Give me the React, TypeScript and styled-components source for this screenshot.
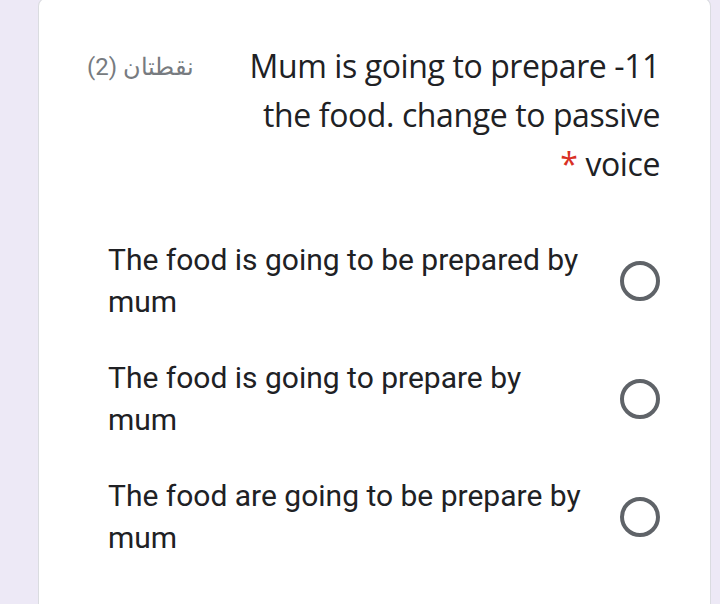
import React from "react";
import styled, { createGlobalStyle } from "styled-components";

const Global = createGlobalStyle`
  html, body { margin: 0; padding: 0; background: #ede9f6; }
  body { width: 720px; height: 604px; overflow: hidden; font-family: Roboto, "Noto Sans", sans-serif; }
`;

const Page = styled.div`
  width: 720px;
  height: 604px;
  display: flex;
  padding-left: 38px;
  padding-right: 9px;
  box-sizing: border-box;
`;

const Card = styled.div`
  flex: 1;
  background: #fff;
  border: 1px solid #dadce0;
  border-bottom: none;
  border-radius: 8px 8px 0 0;
  margin-top: -2px;
  padding: 42px 50px 0 50px;
  direction: rtl;
  display: flex;
  flex-direction: column;
`;

const Header = styled.div`
  display: flex;
  justify-content: space-between;
  align-items: flex-start;
`;

const Title = styled.div`
  width: 430px;
  font-family: "Open Sans", Roboto, sans-serif;
  font-size: 32px;
  line-height: 49px;
  color: #202124;
  letter-spacing: -0.4px;
`;

const Star = styled.span`
  color: #d93025;
`;

const Points = styled.div`
  font-family: Roboto, "Noto Sans", sans-serif;
  font-size: 24px;
  line-height: 49px;
  color: #777b80;
  margin-left: -2px;
  margin-top: 2px;
`;

const Options = styled.div`
  display: flex;
  flex-direction: column;
  gap: 34px;
  margin-top: 51px;
`;

const Option = styled.label`
  display: flex;
  align-items: center;
  gap: 30px;
`;

const Radio = styled.span`
  flex: none;
  width: 32px;
  height: 32px;
  border: 4px solid #5f6368;
  border-radius: 50%;
`;

const OptionText = styled.div`
  direction: ltr;
  flex: 1;
  font-family: Roboto, sans-serif;
  font-size: 30px;
  line-height: 42px;
  color: #202124;
  padding-left: 19px;
`;

const options = [
  "The food is going to be prepared by mum",
  "The food is going to prepare by mum",
  "The food are going to be prepare by mum",
];

export default function App() {
  return (
    <>
      <Global />
      <Page>
        <Card>
          <Header>
            <Title>
              11- Mum is going to prepare the food. change to passive voice <Star>*</Star>
            </Title>
            <Points>نقطتان (2)</Points>
          </Header>
          <Options>
            {options.map((o) => (
              <Option key={o}>
                <Radio />
                <OptionText>{o}</OptionText>
              </Option>
            ))}
          </Options>
        </Card>
      </Page>
    </>
  );
}
